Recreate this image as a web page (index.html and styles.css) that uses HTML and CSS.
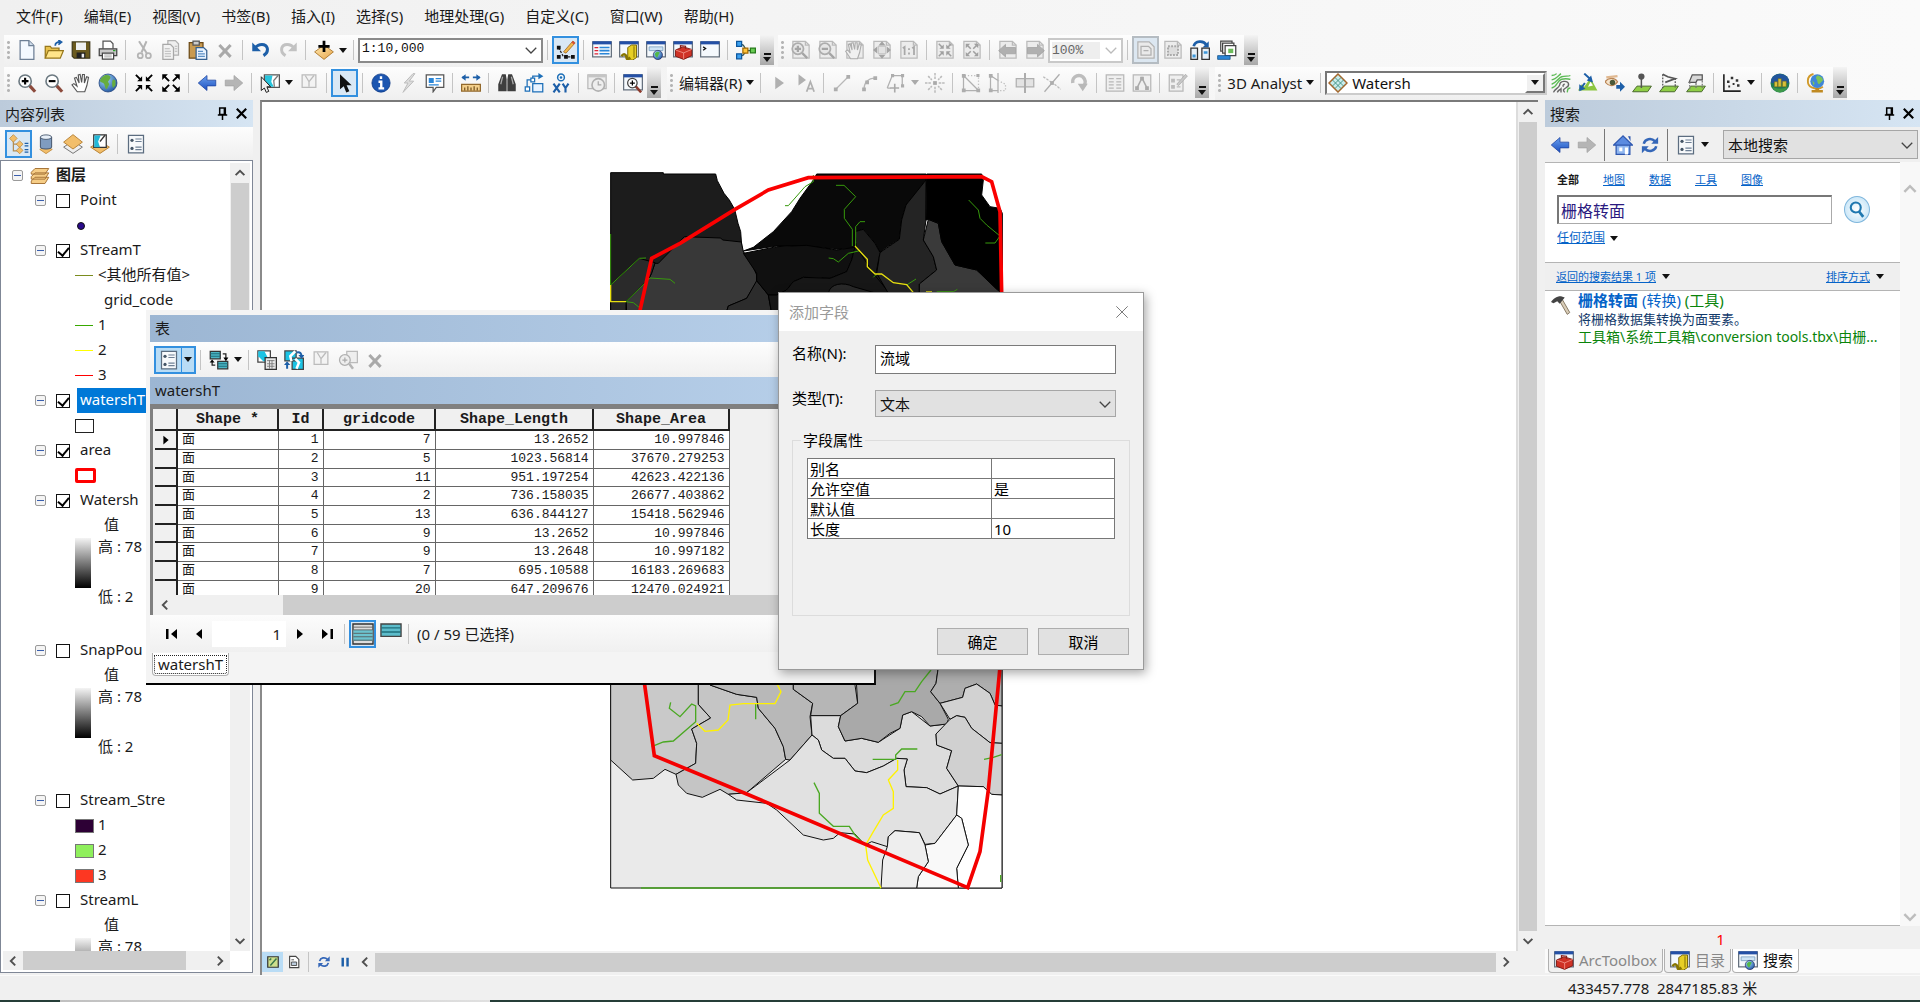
FILE: index.html
```html
<!DOCTYPE html>
<html lang="zh-CN">
<head>
    <meta charset="UTF-8">
    <meta name="viewport" content="width=device-width, initial-scale=1.0">
    <title>ArcMap</title>
    <link rel="stylesheet" href="styles.css">
</head>
<body>
    <!-- Icon sprite -->
    <svg class="sprite" aria-hidden="true">
        <defs>
            <linearGradient id="blueFill" x1="0" y1="0" x2="0" y2="1"><stop offset="0" stop-color="#6aa0ee"/><stop offset="1" stop-color="#1c4fc0"/></linearGradient>
            <linearGradient id="tanFill" x1="0" y1="0" x2="1" y2="1"><stop offset="0" stop-color="#ffe9b0"/><stop offset="1" stop-color="#e8a64c"/></linearGradient>
            <radialGradient id="earthFill" cx=".35" cy=".3" r=".8"><stop offset="0" stop-color="#a8dcff"/><stop offset="1" stop-color="#1a4f9c"/></radialGradient>
        </defs>
        <symbol id="new" viewBox="0 0 16 16"><path d="M2.500.5h7l4 4v11h-11z" fill="#f4f9ff" stroke="#6d7f95"/><path d="M9.500.5v4h4" fill="#cfdcea" stroke="#6d7f95"/></symbol>
        <symbol id="open" viewBox="0 0 16 16"><path d="M1 14.500V5h4l1 1.500h6V9" fill="#e8c14c" stroke="#97771b"/><path d="M1 14.500L3.500 8.500h12L13 14.500z" fill="#ffe58a" stroke="#97771b"/><path d="M9 4.500c0-2 1-3 4-3M11.500 0l2.500 1.700-2.500 2" fill="none" stroke="#1d5fa8" stroke-width="1.400"/></symbol>
        <symbol id="save" viewBox="0 0 16 16"><path d="M1 1.500h14v13H2.500L1 13z" fill="#6a5a1e" stroke="#403a1c"/><path d="M4 2h8v6H4z" fill="#eef0f2"/><path d="M4.500 10h7v4.500h-7z" fill="#222"/><path d="M8.500 11h2v3h-2z" fill="#eee"/></symbol>
        <symbol id="print" viewBox="0 0 16 16"><path d="M4 7V.800h6L12 3v4" fill="#fff" stroke="#555"/><path d="M1 7h14v5.500H1z" fill="#c9c9c9" stroke="#444"/><path d="M3.500 10.500h9v4.700h-9z" fill="#fff" stroke="#444"/><path d="M5 12h6M5 13.500h6" stroke="#999" stroke-width=".7"/><path d="M12 8.500h2" stroke="#2c9c2c"/></symbol>
        <symbol id="cut" viewBox="0 0 16 16"><path d="M4 1l6.500 10M10 1L6 10" fill="none" stroke="#b4b4b4" stroke-width="1.600"/><circle cx="5" cy="12.500" r="2" fill="none" stroke="#b4b4b4" stroke-width="1.400"/><circle cx="11.500" cy="12.500" r="2" fill="none" stroke="#b4b4b4" stroke-width="1.400"/></symbol>
        <symbol id="copy" viewBox="0 0 16 16"><path d="M5.500.5h6L14 3v9H5.500z" fill="#eee" stroke="#b0b0b0"/><path d="M1.500 3.500h6L10 6v9.500H1.500z" fill="#f2f2f2" stroke="#a8a8a8"/><path d="M3 7h4M3 9h5M3 11h5M3 13h5M11 5h2M11 7h2M11 9h2" stroke="#b8b8b8" stroke-width=".8"/></symbol>
        <symbol id="paste" viewBox="0 0 16 16"><path d="M1 2h11v12.500H1z" fill="#c99a50" stroke="#6d4a17"/><path d="M4 .800h5V4H4z" fill="#ccc" stroke="#555"/><path d="M6.500 6h6L15 8.500v7H6.500z" fill="#e8f3ff" stroke="#35608f"/><path d="M8 9h4M8 11h5.500M8 13h5.500" stroke="#5b8fc4"/></symbol>
        <symbol id="del" viewBox="0 0 16 16"><path d="M3.500 4l9 9.500M12.500 4l-9 9.500" stroke="#a9a9a9" stroke-width="2.400"/></symbol>
        <symbol id="undo" viewBox="0 0 16 16"><path d="M3 6.500c3-4 9-4 10 0 .6 2.600-.5 4.500-3 6" fill="none" stroke="#1d5fa8" stroke-width="2.400"/><path d="M1 2v7h7z" fill="#1d5fa8"/></symbol>
        <symbol id="redo" viewBox="0 0 16 16"><path d="M13 6.500c-3-4-9-4-10 0-.6 2.600.5 4.500 3 6" fill="none" stroke="#c2c2c2" stroke-width="2.400"/><path d="M15 2v7H8z" fill="#c2c2c2"/></symbol>
        <symbol id="add" viewBox="0 0 16 16"><path d="M8 4l7.500 5.500L8 15.500.5 9.500z" fill="url(#tanFill)" stroke="#a9762a" stroke-width=".7"/><path d="M8 .5v9M3.500 5h9" stroke="#000" stroke-width="2.200"/></symbol>
        <symbol id="editor" viewBox="0 0 16 16"><path d="M2 6l4 7.500h8" fill="none" stroke="#222" stroke-width="1" stroke-dasharray="2 1"/><path d="M.7 4.500h3v3h-3zM.7 12h3v3h-3zM6.500 12h3v3h-3zM12 12h3v3h-3z" fill="#111"/><path d="M6 9.500L13.500.8l1.800 1.500L8 10.500z" fill="#f2b94a" stroke="#99601c" stroke-width=".6"/><path d="M13.500.8l1.800 1.500-1.200 1.300-1.700-1.600z" fill="#d84c38"/></symbol>
        <symbol id="win" viewBox="0 0 16 16"><path d="M.5 1.500h15v12H.5z" fill="#f5f9fd" stroke="#66717e"/><path d="M.5 1h15v2.500H.5z" fill="#2450a6"/></symbol>
        <symbol id="toc" viewBox="0 0 16 16"><use href="#win"/><path d="M2 6h3M2 8.500h3M2 11h3" stroke="#d23"/><path d="M6 6h8M6 8.500h8M6 11h8" stroke="#2a86d8" stroke-width="1.300"/></symbol>
        <symbol id="catalog" viewBox="0 0 16 16"><use href="#win"/><path d="M7 6l3-2h4v10l-3 2H7z" fill="#e7cf25" stroke="#7c6a0c" stroke-width=".8"/><path d="M2 13c2-3 4-1 4 1s2 1 3 0" fill="none" stroke="#877500" stroke-width="2"/><path d="M12 5v9" stroke="#95820c"/></symbol>
        <symbol id="searchwin" viewBox="0 0 16 16"><use href="#win"/><path d="M2.500 5.500h11v3h-11z" fill="#cfe4f5" stroke="#7fa3c4" stroke-width=".7"/><circle cx="9.500" cy="12" r="3.700" fill="url(#earthFill)" stroke="#225" stroke-width=".5"/><path d="M7 11c1-2 3-2 4-1l-1 2-1 2c-1 0-2-2-2-3z" fill="#54b948"/></symbol>
        <symbol id="toolbox" viewBox="0 0 16 16"><use href="#win"/><path d="M2 8l6-2.500 7 2v5L8.500 15.500 2 13z" fill="#cf3226" stroke="#7a130d" stroke-width=".7"/><path d="M2 8l6.500 2.300L15 7.500M8.500 10.300v5" fill="none" stroke="#f5a197" stroke-width=".6"/><path d="M6 7V4.500l4 .5V7" fill="none" stroke="#8b1e16"/></symbol>
        <symbol id="python" viewBox="0 0 16 16"><use href="#win"/><path d="M2.500 5.500l2 1.300-2 1.400" fill="none" stroke="#111"/></symbol>
        <symbol id="model" viewBox="0 0 16 16"><path d="M4 3.500c4 0 2 5 6 5M4 12.500c4 0 2-4 6-4h3" fill="none" stroke="#355" stroke-width=".9"/><path d="M.5 1h4v4h-4zM.5 11h4v4h-4z" fill="#3ca1f0" stroke="#0c579e"/><path d="M5.500 6.500h4v4h-4z" fill="#ffc53b" stroke="#a26a05"/><path d="M11.500 6.500h4v3.800h-4z" fill="#68cc53" stroke="#267a1a"/></symbol>
        <symbol id="gpage" viewBox="0 0 16 16"><path d="M1.500 1h10l3 3v10.500h-13z" fill="#ececec" stroke="#bababa"/><path d="M11.500 1v3h3" fill="none" stroke="#bababa"/></symbol>
        <symbol id="gzin" viewBox="0 0 16 16"><use href="#gpage"/><circle cx="5.500" cy="7" r="4.500" fill="#e6e6e6" stroke="#adadad" stroke-width="1.400"/><path d="M5.500 4.500v5M3 7h5M9 10.500l4 4" stroke="#a5a5a5" stroke-width="1.800"/></symbol>
        <symbol id="gzout" viewBox="0 0 16 16"><use href="#gpage"/><circle cx="5.500" cy="7" r="4.500" fill="#e6e6e6" stroke="#adadad" stroke-width="1.400"/><path d="M3 7h5M9 10.500l4 4" stroke="#a5a5a5" stroke-width="1.800"/></symbol>
        <symbol id="ghand" viewBox="0 0 16 16"><use href="#gpage"/><path d="M4.500 15L.5 9l1.700-1 2 2.500-1.500-7 1.300-.5L5.700 8 5 2.500l1.500-.3L7.700 7.500l.5-5.300h1.500L9.900 8l1.600-5 1.500.5L11.700 10 10 15z" fill="#f0f0f0" stroke="#adadad" stroke-width=".9"/></symbol>
        <symbol id="gfull" viewBox="0 0 16 16"><use href="#gpage"/><path d="M5 5h6v6H5z" fill="#e2e2e2" stroke="#bbb" stroke-width=".7"/><path d="M8 1l2.800 3.300H5.200zM8 15l2.800-3.300H5.200zM.8 8l3.400-2.800v5.600zM15.200 8l-3.400-2.800v5.600z" fill="#a3a3a3"/></symbol>
        <symbol id="g11" viewBox="0 0 16 16"><use href="#gpage"/><path d="M3 6.500l1.500-1V12M10.500 6.500l1.500-1V12M8 6.500v1.500M8 10v1.500" fill="none" stroke="#a8a8a8" stroke-width="1.400"/></symbol>
        <symbol id="gin" viewBox="0 0 16 16"><use href="#gpage"/><path d="M7 7H3.500L7 3.500zM9 7V3.500L12.500 7zM7 9v3.500L3.500 9zM9 9h3.500L9 12.500z" fill="#a0a0a0"/><path d="M3 3l3 3M13 3l-3 3M3 13l3-3M13 13l-3-3" stroke="#a0a0a0" stroke-width="1.200"/></symbol>
        <symbol id="gout" viewBox="0 0 16 16"><use href="#gpage"/><path d="M3 3h3.500L3 6.500zM13 3v3.500L9.500 3zM3 13V9.500L6.500 13zM13 13H9.500L13 9.500z" fill="#a0a0a0"/><path d="M4 4l3 3M12 4L9 7M4 12l3-3M12 12L9 9" stroke="#a0a0a0" stroke-width="1.200"/></symbol>
        <symbol id="gback" viewBox="0 0 16 16"><use href="#gpage"/><path d="M.5 8.500l5.500-5V6h8v5H6v2.500z" fill="#b0b0b0" stroke="#a0a0a0" stroke-width=".6"/></symbol>
        <symbol id="gfwd" viewBox="0 0 16 16"><use href="#gpage"/><path d="M15.500 8.500l-5.500-5V6H2v5h8v2.500z" fill="#b0b0b0" stroke="#a0a0a0" stroke-width=".6"/></symbol>
        <symbol id="gdraft" viewBox="0 0 16 16"><path d="M1.500 1.500h9l4 4v9h-13z" fill="#eaeaea" stroke="#b3b3b3"/><path d="M4 5h6l2 2v5H4zM6 8.500h4" fill="none" stroke="#b0b0b0"/></symbol>
        <symbol id="gdots" viewBox="0 0 16 16"><use href="#gpage"/><path d="M4 5h8v7H4z" fill="#ddd" stroke="#aaa" stroke-width="1.600" stroke-dasharray="1.500 1"/></symbol>
        <symbol id="layout" viewBox="0 0 16 16"><path d="M3 5c1-4.500 8-5 10-1" fill="none" stroke="#1d5fa8" stroke-width="2.200"/><path d="M15 1v5h-5z" fill="#1d5fa8"/><path d="M.7 6.500H6v9H.7zM9.500 6.500h6v9h-6z" fill="#e8f1f8" stroke="#333"/><path d="M2 11.500h2.500V14H2zM11 9h3v2h-3z" fill="#3c96d8"/></symbol>
        <symbol id="pages" viewBox="0 0 16 16"><path d="M3 .800h9v8H3z" fill="#fff" stroke="#444"/><path d="M4.500 2.500h9v8h-9z" fill="#fff" stroke="#444"/><path d="M6.500 4.500h8.500v8H6.500z" fill="#fff" stroke="#444"/><path d="M9 7h4v3.500H9z" fill="#6cbb5a"/><path d="M.5 12.500h10v3H.5z" fill="#2a86d8" stroke="#124e83" stroke-width=".6"/></symbol>

        <symbol id="zin" viewBox="0 0 16 16"><path d="M9.500 9.500l5 5.500" stroke="#8c4a3c" stroke-width="2.600"/><circle cx="6.500" cy="6.500" r="4.900" fill="#fff" stroke="#6d7a82" stroke-width="1.300"/><path d="M6.500 3.800v5.400M3.800 6.500h5.400" stroke="#000" stroke-width="1.700"/></symbol>
        <symbol id="zout" viewBox="0 0 16 16"><path d="M9.500 9.500l5 5.500" stroke="#8c4a3c" stroke-width="2.600"/><circle cx="6.500" cy="6.500" r="4.900" fill="#fff" stroke="#6d7a82" stroke-width="1.300"/><path d="M3.800 6.500h5.400" stroke="#000" stroke-width="1.700"/></symbol>
        <symbol id="hand" viewBox="0 0 16 16"><path d="M5 15L.8 9.500l1.500-1 2.500 2L2.800 4l1.500-.5L6.500 8l-.7-6.500 1.500-.3L8.500 7.500l.7-6.300h1.500L10.700 8l1.800-5 1.500.5L12.700 10 11 15z" fill="#fff" stroke="#555" stroke-width=".9"/></symbol>
        <symbol id="globe" viewBox="0 0 16 16"><circle cx="8" cy="8" r="7.200" fill="url(#earthFill)" stroke="#1d3f78" stroke-width=".6"/><path d="M5 2c3-1 5 0 5 2l-2 3 1 2-2 4c-2-1-1-4-3-5s-3-1-2-3 2-2 3-3zM12 5l2 1v4l-2 2c-1-2-1-5 0-7z" fill="#67ad3f"/></symbol>
        <symbol id="fin" viewBox="0 0 16 16"><path d="M6.500 6.500H2.500L6.500 2.500zM9.500 6.500V2.500L13.500 6.500zM6.500 9.500v4L2.500 9.500zM9.500 9.500h4L9.500 13.500z"/><path d="M1.500 1.500l4 4M14.500 1.500l-4 4M1.500 14.500l4-4M14.500 14.500l-4-4" stroke="#000" stroke-width="1.500"/></symbol>
        <symbol id="fout" viewBox="0 0 16 16"><path d="M1 1h4.500L1 5.500zM15 1v4.500L10.500 1zM1 15v-4.500L5.500 15zM15 15h-4.500L15 10.500z"/><path d="M2 2l4.500 4.500M14 2L9.500 6.500M2 14l4.500-4.500M14 14L9.500 9.500" stroke="#000" stroke-width="1.500"/></symbol>
        <symbol id="back" viewBox="0 0 16 16"><path d="M1 8l7-6v3.700h7v4.600H8V14z" fill="url(#blueFill)" stroke="#1c429e" stroke-width=".6"/></symbol>
        <symbol id="fwd" viewBox="0 0 16 16"><path d="M15 8L8 2v3.700H1v4.600h7V14z" fill="#b5b5b5" stroke="#a3a3a3" stroke-width=".6"/></symbol>
        <symbol id="select" viewBox="0 0 16 16"><path d="M3.500 1.500h12v10h-12z" fill="#fff" stroke="#555"/><path d="M4 2h6l-1 5 2 4H8L4 7z" fill="#28c4dc"/><path d="M14.500 2L11 6l.5 5" fill="none" stroke="#777"/><path d="M1 3v11l2.500-2 1.500 3.500 2-.8L5.500 11h3z" fill="#eee" stroke="#222" stroke-width=".8"/></symbol>
        <symbol id="clear" viewBox="0 0 16 16"><path d="M2.500 1.500h11v10h-11z" fill="#f3f3f3" stroke="#bbb"/><path d="M5 2l3 5 4-5M8 7v4" fill="none" stroke="#bbb"/></symbol>
        <symbol id="pointer" viewBox="0 0 16 16"><path d="M4 1v12l3-2.500 2 5 2.500-1-2.200-4.700h4z" fill="#111"/></symbol>
        <symbol id="info" viewBox="0 0 16 16"><circle cx="8" cy="8" r="7.300" fill="#1b55b0" stroke="#0e3984" stroke-width=".6"/><path d="M8 2.500v2.200M6 7h2.200v5M6 12.300h4.500" fill="none" stroke="#fff" stroke-width="1.900"/></symbol>
        <symbol id="bolt" viewBox="0 0 16 16"><path d="M12 .5L5 8h3L4 15.500 12.500 6.500H9L13.500.5z" fill="#ddd" stroke="#bcbcbc" stroke-width=".8"/></symbol>
        <symbol id="popup" viewBox="0 0 16 16"><path d="M1 1.500h14v10H9L6.500 15v-3.500H1z" fill="#fff" stroke="#555"/><path d="M3 4h4v4H3z" fill="#2a86d8"/><path d="M8.500 4.500h4.500M8.500 6.500h4.500M3 9.500h8" stroke="#2a86d8"/></symbol>
        <symbol id="measure" viewBox="0 0 16 16"><path d="M1 3.500h5.500M9.500 3.500H15" stroke="#1d5fa8" stroke-width="1.500"/><path d="M.3 3.500l3.400-2.600v5.200zM15.700 3.500l-3.400-2.600v5.200z" fill="#1d5fa8"/><path d="M.5 9h15v5.500H.5z" fill="#f3cf8b" stroke="#92682b"/><path d="M3 11.500V14M5.500 10.500V14M8 11.500V14M10.500 10.500V14M13 11.500V14" stroke="#6b4715" stroke-width=".9"/></symbol>
        <symbol id="binoc" viewBox="0 0 16 16"><path d="M4 1h3l.7 4v9.500H1V9zM12 1H9l-.7 4v9.500H15V9z" fill="#3e3e3e"/><path d="M4.500 3L3 9M11.500 3L13 9" stroke="#aaa"/></symbol>
        <symbol id="route" viewBox="0 0 16 16"><path d="M2.500 12V5.500H7V2.500h6" fill="none" stroke="#1d6fb8"/><path d="M1 11h3.500v3.500H1zM5.500 4h3v3h-3z" fill="#fff" stroke="#1d6fb8"/><path d="M11.500 0l4 2.500-4 2.500z" fill="#1d6fb8"/><path d="M7 8.500h8v6.500H7z" fill="#e8f3ff" stroke="#1d6fb8"/></symbol>
        <symbol id="xy" viewBox="0 0 16 16"><circle cx="8" cy="3.500" r="2.700" fill="none" stroke="#1d6fb8" stroke-width="1.200"/><circle cx="8" cy="3.500" r="1" fill="#1d6fb8"/><path d="M2 8.500l5 7M7 8.500l-5 7M9.300 8.500L11.600 12v3.500M14 8.500L11.600 12" fill="none" stroke="#1d5fa8" stroke-width="1.700"/></symbol>
        <symbol id="clock" viewBox="0 0 16 16"><path d="M.7 1.500h14.600v11H.7z" fill="#eee" stroke="#b8b8b8"/><path d="M1 2.500h14" stroke="#c5c5c5" stroke-width="2"/><circle cx="9" cy="9.500" r="5" fill="#eee" stroke="#b0b0b0" stroke-width="1.300"/><path d="M9 6.500v3h2.500" fill="none" stroke="#aaa"/></symbol>
        <symbol id="viewer" viewBox="0 0 16 16"><use href="#win"/><path d="M10 10.500l4.500 5" stroke="#8c3a2c" stroke-width="2"/><circle cx="7.500" cy="8" r="3.800" fill="#fff" stroke="#444"/><path d="M7.500 6v4M5.500 8h4" stroke="#000"/></symbol>

        <symbol id="e1" viewBox="0 0 16 16"><path d="M5 3v10l7-5z" fill="#b0b0b0"/></symbol>
        <symbol id="e2" viewBox="0 0 16 16"><path d="M2 1v9l6-4.500z" fill="#b0b0b0"/><path d="M8.500 15l3-8 3 8M9.500 12.500h4" fill="none" stroke="#b0b0b0" stroke-width="1.400"/></symbol>
        <symbol id="e3" viewBox="0 0 16 16"><path d="M3 13L13 3" stroke="#b8b8b8"/><path d="M1.500 11.500h3v3h-3zM11.500 1.500h3v3h-3z" fill="#adadad"/></symbol>
        <symbol id="e4" viewBox="0 0 16 16"><path d="M4 13c0-5 3-9 9-9" fill="none" stroke="#b8b8b8"/><path d="M2.500 11.500h3v3h-3zM11.500 2.500h3v3h-3zM5 6h3v3H5z" fill="#adadad"/></symbol>
        <symbol id="e5" viewBox="0 0 16 16"><path d="M1 12L5 2h8v9M1 12h3" fill="none" stroke="#b0b0b0"/><path d="M4 .8h2.500v2.500H4zM12 .8h2.500v2.500H12zM12 9h2.500v2.500H12z" fill="#adadad"/><path d="M7 8.500v7M3.500 12h7" stroke="#aaa" stroke-width="1.300"/></symbol>
        <symbol id="e6" viewBox="0 0 16 16"><path d="M8 0v5M8 11v5M0 8h5M11 8h5M2.500 2.500l3 3M13.500 2.500l-3 3M2.500 13.500l3-3M13.500 13.500l-3-3" stroke="#bbb" stroke-width="1.200" stroke-dasharray="2 .7"/><path d="M6.500 6.500h3v3h-3z" fill="#aaa"/></symbol>
        <symbol id="e7" viewBox="0 0 16 16"><path d="M2 2v12h12zM2 2l12 12" fill="none" stroke="#b0b0b0"/><path d="M3 2h11v11" fill="none" stroke="#c0c0c0" stroke-dasharray="1 1.500"/><path d="M.7.7h3v3h-3zM.7 12.300h3v3h-3zM12.300 12.300h3v3h-3zM12.300.7h2.500v2.500h-2.500z" fill="#adadad"/></symbol>
        <symbol id="e8" viewBox="0 0 16 16"><path d="M2 2v12M2 14h6M8 0v16M2 2l6 4" fill="none" stroke="#b0b0b0"/><path d="M8 6l6 3v5H8" fill="none" stroke="#bbb" stroke-dasharray="1 1.500"/><path d="M.7.7h3v3h-3zM.7 12.300h3v3h-3z" fill="#adadad"/></symbol>
        <symbol id="e9" viewBox="0 0 16 16"><path d="M1 4.500h14v6.500H1z" fill="#e3e3e3" stroke="#b0b0b0"/><path d="M8 0v16" stroke="#adadad" stroke-width="1.600"/></symbol>
        <symbol id="e10" viewBox="0 0 16 16"><path d="M2 15L14 1" stroke="#adadad"/><path d="M1 3l6 4M10 9l5 4" stroke="#bbb" stroke-dasharray="2 1"/><path d="M6.500 6.500h3v3h-3z" fill="#adadad"/></symbol>
        <symbol id="e11" viewBox="0 0 16 16"><path d="M3 8a5 5 0 1 1 8 3" fill="none" stroke="#bdbdbd" stroke-width="2.800"/><path d="M7 8.500h8l-4 6z" fill="#b8b8b8"/></symbol>
        <symbol id="e12" viewBox="0 0 16 16"><path d="M1 1.500h14v13H1z" fill="#efefef" stroke="#b8b8b8"/><path d="M3 4.500h4M3 7h4M3 9.500h4M3 12h4M9 4.500h4M9 7h4M9 9.500h4M9 12h4" stroke="#b8b8b8"/></symbol>
        <symbol id="e13" viewBox="0 0 16 16"><path d="M1 1.500h14v13H1z" fill="#efefef" stroke="#b8b8b8"/><path d="M4 12l4-8 4 8" fill="none" stroke="#aaa" stroke-width="1.300"/><path d="M2.500 10.500h3v3h-3zM10.500 10.500h3v3h-3zM6.500 3h3v3h-3z" fill="#aaa"/></symbol>
        <symbol id="e14" viewBox="0 0 16 16"><path d="M1 1.500h11v13H1z" fill="#efefef" stroke="#b8b8b8"/><path d="M3 5h2v2H3zM3 10h2v2H3zM7 5.500h3M7 11h3" fill="#bbb" stroke="#bbb"/><path d="M7 9l7-8 1.500 1.500-7 7.500z" fill="#c8c8c8" stroke="#aaa" stroke-width=".6"/></symbol>

        <symbol id="raster" viewBox="0 0 16 16"><path d="M8 .8L15.200 8 8 15.200.8 8z" fill="#c9ecec" stroke="#a5672c" stroke-width="1.200"/><path d="M5.500 3.500l7 7M3.500 5.500l7 7M10.500 3.500l-7 7M12.500 5.500l-7 7" stroke="#3a8c7c" stroke-width=".7"/></symbol>
        <symbol id="contour" viewBox="0 0 16 16"><path d="M.5 2c2 0 3-.5 4-1.500M.5 5.500C4 5 6 2 8 .5M.5 9c4-1 5-5 8-6s5 0 7-1M.5 12c5-1 4-6 8-7s5 0 7 0M15.500 12c-3 0-2 2-2.500 3.500" fill="none" stroke="#5cba55" stroke-width="1.100"/><path d="M2 15.500c1-3 4-3 5-6 0-3 6-4 7-1s-3 3-4 5c0 1 1 2 1 2M10 11c-1-1 0-2 1-2M5 15.500c1-2 2-2 3-3v3" fill="none" stroke="#666" stroke-width="1.100"/></symbol>
        <symbol id="steep" viewBox="0 0 16 16"><path d="M0 14l3-5 2 2 5-7 5.500 10z" fill="#8cc63f"/><path d="M8 11l2-4 2 3z" fill="#fff"/><path d="M5 .5l5 4.500M5.500 8L2.500 12" stroke="#1d5fa8" stroke-width="1.600"/><path d="M12 7.500L7 6l3.500-4zM1 14.500V9l5 3.500z" fill="#1d5fa8"/></symbol>
        <symbol id="sight" viewBox="0 0 16 16"><path d="M0 7c3-4 8-3 10 0-3 4-7 4-10 0z" fill="#f6e4cc" stroke="#b98555"/><circle cx="6" cy="7.500" r="2.200" fill="#4b5a3a"/><path d="M9 9.500h3V7l4 4-4 4v-2.500H9z" fill="#1d5fa8"/><path d="M1 3.500l9-1" stroke="#e0b890" stroke-width="2"/></symbol>
        <symbol id="ipoint" viewBox="0 0 16 16"><path d="M4 10.500h11.500l-3 4.500H.5z" fill="#8fce46" stroke="#4a6a2e" stroke-width=".8"/><path d="M7.500 4v8" stroke="#555" stroke-width="1.200"/><circle cx="7.500" cy="2.800" r="2.500" fill="#555"/></symbol>
        <symbol id="iline" viewBox="0 0 16 16"><path d="M4 10.500h11.500l-3 4.500H.5z" fill="#8fce46" stroke="#4a6a2e" stroke-width=".8"/><path d="M3 1l4 2 6 1.500-8 3" fill="none" stroke="#555" stroke-width="1.300"/><path d="M3 1v11M13 4v8" fill="none" stroke="#555" stroke-dasharray="1.500 1"/></symbol>
        <symbol id="ipoly" viewBox="0 0 16 16"><path d="M4 10.500h11.500l-3 4.500H.5z" fill="#8fce46" stroke="#4a6a2e" stroke-width=".8"/><path d="M5 1.500h8v4H9l-1 2H2.500z" fill="#d8d8d8" stroke="#555"/><path d="M3 7v6M8 8v5M13 6v6" stroke="#777" stroke-dasharray="1.500 1"/></symbol>
        <symbol id="graph" viewBox="0 0 16 16"><path d="M1.500 1v13.500H15" fill="none" stroke="#222" stroke-width="1.300"/><path d="M4 6h2v2H4zM7 3h2v2H7zM11 5h2v2h-2zM12 9h2v2h-2zM5 10h1.500v1.500H5zM8.500 8H10v1.500H8.500z" fill="#333"/></symbol>
        <symbol id="scene" viewBox="0 0 16 16"><circle cx="8" cy="8" r="7.600" fill="#1f7a55"/><path d="M1 5C3 0 12-1 15 5v3H1z" fill="#22559c"/><path d="M2 11c3 2 9 2 12 0-1 3-4 4.500-6 4.500s-5-1-6-4.500z" fill="#3d9a4a"/><path d="M3.500 7h2.500v4H3.500zM6.500 4.500h2.500v6.500H6.500zM10 6.500h3v4.500h-3z" fill="#d8c03a" stroke="#7a6a10" stroke-width=".4"/></symbol>
        <symbol id="arcglobe" viewBox="0 0 16 16"><path d="M6 .8C0 2 .5 10 4.500 11.500s7 1 9-.5" fill="none" stroke="#d19a2a" stroke-width="1.500"/><circle cx="9" cy="6.500" r="5.500" fill="#3f86d8"/><path d="M9 2c2 0 5 2 4.500 4l-3 3c-2-1-1-3-2-4s-.5-2 .5-3zM5 6l2 2-1 2z" fill="#7cc45a"/><path d="M7.500 12h3v1.500h3V15.500H4.500v-2h3z" fill="#c08a22"/></symbol>

        <symbol id="order" viewBox="0 0 16 16"><path d="M3.500 4v9.500h4M3.500 8h4" fill="none" stroke="#b28d55"/><path d="M3.500.5l3 3-3 3-3-3zM8.500 5.500l2.700 2.600-2.700 2.700L5.800 8.100zM8.500 10.500l2.700 2.600-2.700 2.700-2.700-2.700z" fill="#f2be6a" stroke="#b9853a" stroke-width=".6"/><path d="M12.500 7.500h3M12.500 9.500h3M12.500 12.500h3M12.500 14.500h3" stroke="#1d5fa8"/></symbol>
        <symbol id="source" viewBox="0 0 16 16"><path d="M8 9.500l5 2.800-5 3.400-5-3.400z" fill="#f2be6a" stroke="#b9853a" stroke-width=".6"/><path d="M3.500 2.500v8c0 2 9 2 9 0v-8z" fill="#7f9cc0" stroke="#44556c" stroke-width=".8"/><ellipse cx="8" cy="2.500" rx="4.500" ry="1.800" fill="#e6eef7" stroke="#44556c" stroke-width=".7"/></symbol>
        <symbol id="visible" viewBox="0 0 16 16"><path d="M8 5.500l7.500 5-7.500 5-7.500-5z" fill="#eee" stroke="#777" stroke-width=".8"/><path d="M8 .5l7.500 6-7.500 5.500-7.500-5.500z" fill="#f2be6a" stroke="#b9853a" stroke-width=".8"/></symbol>
        <symbol id="selection" viewBox="0 0 16 16"><path d="M8 6l7.500 4.500-7.500 5-7.500-5z" fill="#f2be6a" stroke="#b9853a" stroke-width=".8"/><path d="M3 .7h10v10H3z" fill="#fff" stroke="#333"/><path d="M3.500 1.200h5L6.500 6l1.500 4.500H3.500z" fill="#22b8d8"/><path d="M12 1L8 6" stroke="#333"/></symbol>
        <symbol id="options" viewBox="0 0 16 16"><path d="M2 1h12v14H2z" fill="#f7f9fb" stroke="#5c6d80"/><circle cx="4.800" cy="5" r="1.300" fill="#456"/><circle cx="4.800" cy="11.500" r="1.300" fill="#456"/><path d="M7.500 4h5M7.500 6h5M7.500 10.500h5M7.500 12.500h5" stroke="#6e8095" stroke-width=".9"/></symbol>
        <symbol id="layers" viewBox="0 0 16 16"><path d="M1 12l3-3h11l-3 5H1zM1 8.500l3-3h11l-3 5H1zM1 5l3-3h11l-3 4.500H1z" fill="#f6cd86" stroke="#a8763a" stroke-width=".8"/></symbol>
        <symbol id="related" viewBox="0 0 16 16"><path d="M1 1h8v6H1zM7 9h8v6H7z" fill="#4cb5c4" stroke="#333"/><path d="M1 3h8M1 5h8M7 11h8M7 13h8" stroke="#1e6f7c" stroke-width=".8"/><path d="M11 3h2.500v4M5 12H2.500V9" fill="none" stroke="#222"/><path d="M11.500 6h4L13.500 9zM.5 10h4L2.500 7.500z"/></symbol>
        <symbol id="selattr" viewBox="0 0 16 16"><path d="M.7.7h10v9h-10z" fill="#fff" stroke="#444"/><path d="M1 1h5L8 5l1 4H5L1 5z" fill="#1cc3e4"/><path d="M6.500 6h9v9.500h-9z" fill="#e9e9e9" stroke="#333"/><path d="M8 8.500h6M8 11h6M8 13h6M10 8v7M12 8v7" stroke="#777" stroke-width=".7"/></symbol>
        <symbol id="switch" viewBox="0 0 16 16"><path d="M.7.7h9v8h-9zM6.500 6.500h9v9h-9z" fill="#1cc3e4" stroke="#444"/><path d="M9 1L5 5l1 4M9 7l3 3-2 5" fill="none" stroke="#fff" stroke-width="2"/><path d="M10 2c3-1 4 1 4 3M2.500 15v-4" fill="none" stroke="#1d5fa8" stroke-width="1.600"/><path d="M11.500 4h5L14 7zM0 12h5L2.500 9z" fill="#1d5fa8"/></symbol>
        <symbol id="zsel" viewBox="0 0 16 16"><path d="M7 1h8.500v9H7z" fill="#eee" stroke="#bbb"/><path d="M9 11l3 4" stroke="#b5b5b5" stroke-width="2"/><circle cx="5.500" cy="8" r="4.300" fill="#eee" stroke="#b0b0b0"/><path d="M5.500 6v4M3.500 8h4" stroke="#aaa"/></symbol>
        <symbol id="allrec" viewBox="0 0 16 16"><path d="M.7.7h14.600v14.600H.7z" fill="#ddd" stroke="#333"/><path d="M1 5h14v8H1z" fill="#6cc3cf"/><path d="M1 3h14M1 5h14M1 7.500h14M1 10h14M1 12.500h14" stroke="#555" stroke-width=".6"/></symbol>
        <symbol id="selrec" viewBox="0 0 16 16"><path d="M.7.7h14.600v9H.7z" fill="#5cbccb" stroke="#444"/><path d="M1 3.500h14M1 6.500h14" stroke="#1e6f7c"/></symbol>
        <symbol id="home" viewBox="0 0 16 16"><path d="M2.500 7.500h11v8h-11z" fill="#8fb6ef" stroke="#2d56ae"/><path d="M8 .7L.5 8h15z" fill="#5b8be0" stroke="#2d56ae"/><path d="M12 1h2v4" fill="#2d56ae"/><path d="M5 10h2.500v3H5zM9.500 10H12v5.500H9.500z" fill="#fff"/></symbol>
        <symbol id="refresh" viewBox="0 0 16 16"><path d="M3 7c1-4 6-5 9-2M13 9c-1 4-6 5-9 2" fill="none" stroke="#3567b8" stroke-width="2"/><path d="M14.500 1.500V7H9zM1.500 14.500V9H7z" fill="#3567b8"/></symbol>
        <symbol id="glass" viewBox="0 0 16 16"><circle cx="7" cy="6" r="4" fill="none" stroke="#1f78b0" stroke-width="1.700"/><path d="M9.500 9l3.500 4.500" stroke="#1f78b0" stroke-width="2.200"/></symbol>
        <symbol id="hammer" viewBox="0 0 16 16"><path d="M7 5l2-1.500L15 14l-2 1.500z" fill="#d9cdb8" stroke="#7a6b55" stroke-width=".7"/><path d="M0 5.500C2 3 4 1 8 1l3 1-4 5-2-2-3 1.500z" fill="#444"/></symbol>
        <symbol id="dataview" viewBox="0 0 16 16"><path d="M2 2h12v12H2z" fill="#cddf8c" stroke="#333" stroke-width="1.400"/><path d="M5 12l7-8M4 6l2-2" stroke="#39764a" stroke-width="1.700"/></symbol>
        <symbol id="pageview" viewBox="0 0 16 16"><path d="M3 1.500h7l3.500 3.500v9.500H3z" fill="#fff" stroke="#444" stroke-width="1.300"/><path d="M5 8h6v4H5zM5 5.500h3" fill="#bcd" stroke="#444"/></symbol>
        <symbol id="pause" viewBox="0 0 16 16"><path d="M4 3h2.800v10H4zM9.500 3h2.800v10H9.500z" fill="#1d5fa8"/></symbol>
        <symbol id="pin" viewBox="0 0 16 16"><path d="M5 2h6v7H5zM3 9.500h10M8 10v5M10 2v7" fill="none" stroke="#000" stroke-width="1.600"/></symbol>
        <symbol id="close" viewBox="0 0 16 16"><path d="M3 3l10 10M13 3L3 13" stroke="#000" stroke-width="2.300"/></symbol>
        <symbol id="thinclose" viewBox="0 0 16 16"><path d="M1.500 1.500l13 13M14.500 1.500l-13 13" stroke="#777" stroke-width="1.100"/></symbol>
        <symbol id="up" viewBox="0 0 16 16"><path d="M3 10.500l5-5 5 5" fill="none" stroke="currentColor" stroke-width="2.200"/></symbol>
        <symbol id="down" viewBox="0 0 16 16"><path d="M3 5.500l5 5 5-5" fill="none" stroke="currentColor" stroke-width="2.200"/></symbol>
        <symbol id="chevron" viewBox="0 0 16 16"><path d="M2 5.500l6 6 6-6" fill="none" stroke="currentColor" stroke-width="1.500"/></symbol>
        <symbol id="left" viewBox="0 0 16 16"><path d="M10.500 3l-5 5 5 5" fill="none" stroke="currentColor" stroke-width="2.200"/></symbol>
        <symbol id="right" viewBox="0 0 16 16"><path d="M5.500 3l5 5-5 5" fill="none" stroke="currentColor" stroke-width="2.200"/></symbol>
        <symbol id="first" viewBox="0 0 16 16"><path d="M2 3h2.500v10H2zM13 3v10L7 8z"/></symbol>
        <symbol id="prev" viewBox="0 0 16 16"><path d="M11 3v10L5 8z"/></symbol>
        <symbol id="next" viewBox="0 0 16 16"><path d="M5 3v10l6-5z"/></symbol>
        <symbol id="last" viewBox="0 0 16 16"><path d="M11.500 3H14v10h-2.500zM3 3v10l6-5z"/></symbol>
    </svg>

    <nav class="menubar">
        <button>文件(F)</button>
        <button>编辑(E)</button>
        <button>视图(V)</button>
        <button>书签(B)</button>
        <button>插入(I)</button>
        <button>选择(S)</button>
        <button>地理处理(G)</button>
        <button>自定义(C)</button>
        <button>窗口(W)</button>
        <button>帮助(H)</button>
    </nav>

    <div class="toolbar-row">
        <div class="toolbar">
            <span class="grip"></span>
            <button class="tool" aria-label="新建"><svg><use href="#new"/></svg></button>
            <button class="tool" aria-label="打开"><svg><use href="#open"/></svg></button>
            <button class="tool" aria-label="保存"><svg><use href="#save"/></svg></button>
            <button class="tool" aria-label="打印"><svg><use href="#print"/></svg></button>
            <span class="sep"></span>
            <button class="tool" aria-label="剪切"><svg><use href="#cut"/></svg></button>
            <button class="tool" aria-label="复制"><svg><use href="#copy"/></svg></button>
            <button class="tool" aria-label="粘贴"><svg><use href="#paste"/></svg></button>
            <button class="tool" aria-label="删除"><svg><use href="#del"/></svg></button>
            <span class="sep"></span>
            <button class="tool" aria-label="撤销"><svg><use href="#undo"/></svg></button>
            <button class="tool" aria-label="恢复"><svg><use href="#redo"/></svg></button>
            <span class="sep"></span>
            <button class="tool" aria-label="添加数据"><svg><use href="#add"/></svg></button>
            <button class="drop" aria-label="添加数据菜单"></button>
            <span class="sep"></span>
            <span class="combo combo-scale">
                <select aria-label="比例"><option>1:10,000</option></select>
                <svg><use href="#chevron"/></svg>
            </span>
            <span class="sep"></span>
            <button class="tool active" aria-label="编辑器工具条"><svg><use href="#editor"/></svg></button>
            <span class="sep"></span>
            <button class="tool" aria-label="内容列表"><svg><use href="#toc"/></svg></button>
            <button class="tool" aria-label="目录"><svg><use href="#catalog"/></svg></button>
            <button class="tool" aria-label="搜索"><svg><use href="#searchwin"/></svg></button>
            <button class="tool" aria-label="ArcToolbox"><svg><use href="#toolbox"/></svg></button>
            <button class="tool" aria-label="Python"><svg><use href="#python"/></svg></button>
            <span class="sep"></span>
            <button class="tool" aria-label="模型构建器"><svg><use href="#model"/></svg></button>
            <button class="overflow" aria-label="更多"></button>
        </div>
        <div class="toolbar">
            <span class="grip"></span>
            <button class="tool" aria-label="放大页面"><svg><use href="#gzin"/></svg></button>
            <button class="tool" aria-label="缩小页面"><svg><use href="#gzout"/></svg></button>
            <button class="tool" aria-label="平移页面"><svg><use href="#ghand"/></svg></button>
            <button class="tool" aria-label="整个页面"><svg><use href="#gfull"/></svg></button>
            <button class="tool" aria-label="实际大小"><svg><use href="#g11"/></svg></button>
            <span class="sep"></span>
            <button class="tool" aria-label="固定放大"><svg><use href="#gin"/></svg></button>
            <button class="tool" aria-label="固定缩小"><svg><use href="#gout"/></svg></button>
            <span class="sep"></span>
            <button class="tool" aria-label="上一范围"><svg><use href="#gback"/></svg></button>
            <button class="tool" aria-label="下一范围"><svg><use href="#gfwd"/></svg></button>
            <span class="combo combo-percent">
                <select aria-label="缩放百分比"><option>100%</option></select>
                <svg><use href="#chevron"/></svg>
            </span>
            <span class="sep"></span>
            <button class="tool pressed" aria-label="草图模式"><svg><use href="#gdraft"/></svg></button>
            <button class="tool" aria-label="焦点数据框"><svg><use href="#gdots"/></svg></button>
            <button class="tool" aria-label="更改布局"><svg><use href="#layout"/></svg></button>
            <button class="tool" aria-label="数据驱动页面"><svg><use href="#pages"/></svg></button>
            <button class="overflow" aria-label="更多"></button>
        </div>
    </div>

    <div class="toolbar-row">
        <div class="toolbar">
            <span class="grip"></span>
            <button class="tool" aria-label="放大"><svg><use href="#zin"/></svg></button>
            <button class="tool" aria-label="缩小"><svg><use href="#zout"/></svg></button>
            <button class="tool" aria-label="平移"><svg><use href="#hand"/></svg></button>
            <button class="tool" aria-label="全图"><svg><use href="#globe"/></svg></button>
            <span class="sep"></span>
            <button class="tool" aria-label="固定比例放大"><svg><use href="#fin"/></svg></button>
            <button class="tool" aria-label="固定比例缩小"><svg><use href="#fout"/></svg></button>
            <span class="sep"></span>
            <button class="tool" aria-label="返回"><svg><use href="#back"/></svg></button>
            <button class="tool" aria-label="前进"><svg><use href="#fwd"/></svg></button>
            <span class="sep"></span>
            <button class="tool" aria-label="选择要素"><svg><use href="#select"/></svg></button>
            <button class="drop" aria-label="选择要素菜单"></button>
            <button class="tool" aria-label="清除所选要素"><svg><use href="#clear"/></svg></button>
            <span class="sep"></span>
            <button class="tool active" aria-label="选择元素"><svg><use href="#pointer"/></svg></button>
            <span class="sep"></span>
            <button class="tool" aria-label="识别"><svg><use href="#info"/></svg></button>
            <button class="tool" aria-label="超链接"><svg><use href="#bolt"/></svg></button>
            <button class="tool" aria-label="HTML 弹出窗口"><svg><use href="#popup"/></svg></button>
            <span class="sep"></span>
            <button class="tool" aria-label="测量"><svg><use href="#measure"/></svg></button>
            <span class="sep"></span>
            <button class="tool" aria-label="查找"><svg><use href="#binoc"/></svg></button>
            <button class="tool" aria-label="查找路径"><svg><use href="#route"/></svg></button>
            <button class="tool" aria-label="转到 XY"><svg><use href="#xy"/></svg></button>
            <span class="sep"></span>
            <button class="tool" aria-label="时间滑块"><svg><use href="#clock"/></svg></button>
            <span class="sep"></span>
            <button class="tool" aria-label="查看器窗口"><svg><use href="#viewer"/></svg></button>
            <button class="overflow" aria-label="更多"></button>
        </div>
        <div class="toolbar">
            <span class="grip"></span>
            <button class="text-tool">编辑器(R)</button>
            <button class="drop" aria-label="编辑器菜单"></button>
            <span class="sep"></span>
            <button class="tool" aria-label="编辑工具"><svg><use href="#e1"/></svg></button>
            <button class="tool" aria-label="编辑注记"><svg><use href="#e2"/></svg></button>
            <span class="sep"></span>
            <button class="tool" aria-label="直线段"><svg><use href="#e3"/></svg></button>
            <button class="tool" aria-label="弧段"><svg><use href="#e4"/></svg></button>
            <button class="tool" aria-label="追踪"><svg><use href="#e5"/></svg></button>
            <button class="drop muted" aria-label="追踪菜单"></button>
            <button class="tool" aria-label="点"><svg><use href="#e6"/></svg></button>
            <span class="sep"></span>
            <button class="tool" aria-label="编辑折点"><svg><use href="#e7"/></svg></button>
            <button class="tool" aria-label="整形"><svg><use href="#e8"/></svg></button>
            <button class="tool" aria-label="裁剪面"><svg><use href="#e9"/></svg></button>
            <button class="tool" aria-label="分割"><svg><use href="#e10"/></svg></button>
            <button class="tool" aria-label="旋转"><svg><use href="#e11"/></svg></button>
            <span class="sep"></span>
            <button class="tool" aria-label="属性"><svg><use href="#e12"/></svg></button>
            <button class="tool" aria-label="草图属性"><svg><use href="#e13"/></svg></button>
            <span class="sep"></span>
            <button class="tool" aria-label="创建要素"><svg><use href="#e14"/></svg></button>
            <button class="overflow" aria-label="更多"></button>
        </div>
        <div class="toolbar">
            <span class="grip"></span>
            <button class="text-tool">3D Analyst</button>
            <button class="drop" aria-label="3D Analyst 菜单"></button>
            <span class="sep"></span>
            <span class="combo combo-layer">
                <svg class="lead"><use href="#raster"/></svg>
                <select aria-label="图层"><option>Watersh</option></select>
                <span class="classic-arrow"></span>
            </span>
            <button class="tool" aria-label="等值线"><svg><use href="#contour"/></svg></button>
            <button class="tool" aria-label="最陡路径"><svg><use href="#steep"/></svg></button>
            <button class="tool" aria-label="通视线"><svg><use href="#sight"/></svg></button>
            <button class="tool" aria-label="插入点"><svg><use href="#ipoint"/></svg></button>
            <button class="tool" aria-label="插入线"><svg><use href="#iline"/></svg></button>
            <button class="tool" aria-label="插入面"><svg><use href="#ipoly"/></svg></button>
            <span class="sep"></span>
            <button class="tool" aria-label="剖面图"><svg><use href="#graph"/></svg></button>
            <button class="drop" aria-label="剖面图菜单"></button>
            <span class="sep"></span>
            <button class="tool" aria-label="ArcScene"><svg><use href="#scene"/></svg></button>
            <span class="sep"></span>
            <button class="tool" aria-label="ArcGlobe"><svg><use href="#arcglobe"/></svg></button>
            <button class="overflow" aria-label="更多"></button>
        </div>
    </div>

    <main class="workspace">
        <aside class="toc">
            <header class="panel-title">
                <h2>内容列表</h2>
                <button aria-label="自动隐藏"><svg><use href="#pin"/></svg></button>
                <button aria-label="关闭"><svg><use href="#close"/></svg></button>
            </header>
            <div class="toc-tools">
                <button class="tool active" aria-label="按绘制顺序列出"><svg><use href="#order"/></svg></button>
                <button class="tool" aria-label="按源列出"><svg><use href="#source"/></svg></button>
                <button class="tool" aria-label="按可见性列出"><svg><use href="#visible"/></svg></button>
                <button class="tool" aria-label="按选择列出"><svg><use href="#selection"/></svg></button>
                <span class="sep"></span>
                <button class="tool" aria-label="选项"><svg><use href="#options"/></svg></button>
            </div>
            <div class="toc-box">
                <div class="toc-body">
                    <div class="tree">
                        <div class="node root"><span class="fold"></span><svg><use href="#layers"/></svg><b>图层</b></div>
                        <div class="node"><span class="fold"></span><label><input type="checkbox"><span>Point</span></label></div>
                        <div class="legend"><span class="sym"><i class="dot"></i></span></div>
                        <div class="node"><span class="fold"></span><label><input type="checkbox" checked><span>STreamT</span></label></div>
                        <div class="legend"><span class="sym"><i class="line olive"></i></span><span>&lt;其他所有值&gt;</span></div>
                        <div class="legend heading"><span>grid_code</span></div>
                        <div class="legend"><span class="sym"><i class="line green"></i></span><span>1</span></div>
                        <div class="legend"><span class="sym"><i class="line yellow"></i></span><span>2</span></div>
                        <div class="legend"><span class="sym"><i class="line red"></i></span><span>3</span></div>
                        <div class="node"><span class="fold"></span><label><input type="checkbox" checked><span class="selected">watershT</span></label></div>
                        <div class="legend"><span class="sym"><i class="box"></i></span></div>
                        <div class="node"><span class="fold"></span><label><input type="checkbox" checked><span>area</span></label></div>
                        <div class="legend"><span class="sym"><i class="box outline-red"></i></span></div>
                        <div class="node"><span class="fold"></span><label><input type="checkbox" checked><span>Watersh</span></label></div>
                        <div class="legend heading"><span>值</span></div>
                        <div class="ramp"><i></i><div><span>高 : 78</span><span>低 : 2</span></div></div>
                        <div class="node"><span class="fold"></span><label><input type="checkbox"><span>SnapPou</span></label></div>
                        <div class="legend heading"><span>值</span></div>
                        <div class="ramp"><i></i><div><span>高 : 78</span><span>低 : 2</span></div></div>
                        <div class="node"><span class="fold"></span><label><input type="checkbox"><span>Stream_Stre</span></label></div>
                        <div class="legend"><span class="sym"><i class="box fill-purple"></i></span><span>1</span></div>
                        <div class="legend"><span class="sym"><i class="box fill-green"></i></span><span>2</span></div>
                        <div class="legend"><span class="sym"><i class="box fill-red"></i></span><span>3</span></div>
                        <div class="node"><span class="fold"></span><label><input type="checkbox"><span>StreamL</span></label></div>
                        <div class="legend heading"><span>值</span></div>
                        <div class="ramp"><i></i><div><span>高 : 78</span></div></div>
                    </div>
                    <div class="vscroll">
                        <svg><use href="#up"/></svg><i class="thumb thumb-toc"></i><svg><use href="#down"/></svg>
                    </div>
                </div>
                <div class="hscroll toc-hscroll">
                    <svg><use href="#left"/></svg><i class="thumb"></i><svg><use href="#right"/></svg>
                </div>
            </div>
        </aside>

        <section class="map-pane">
            <div class="map-body">
                <div class="map-canvas">
                    <svg class="map" viewBox="0 0 1260 2220" role="img" aria-label="流域地图">
                        <g stroke="#000" stroke-width="3" stroke-linejoin="round">
                            <path d="M32 38H190V42H347L352 62 372 100 388 120 404 148 414 190 422 215 426 270 470 330 535 420V900H32z" fill="#1c1c1c"/>
                            <path d="M253 230L362 234 368 240 424 246 430 275 455 310 470 345V365L440 415 410 428 385 438 378 460H80L78 425 150 350 165 310 175 310z" fill="#383838"/>
                            <path d="M32 375L118 295 165 308 155 340 145 358 78 425V460H32z" fill="#2a2a2a"/>
                            <path d="M470 362L505 405 515 460H378L385 438 440 415z" fill="#2c2c2c"/>
                            <path d="M430 273L460 262 520 215 575 155 600 115 640 60 650 42H978V60L940 110 918 135 905 180 898 238 860 262 840 278 825 250 790 208 765 215V265L710 268 620 258 530 258z" fill="#090909"/>
                            <path d="M430 280L530 260 620 256 710 270 765 262 755 300 740 335 690 355 610 352 580 365 560 390 530 405 505 405 470 362 470 340z" fill="#101010"/>
                            <path d="M505 405L530 405 560 390 580 365 610 352 690 355 740 335 755 300 768 250 840 300 865 395 960 410 960 460H515z" fill="#171717"/>
                            <path d="M685 400C690 370 730 365 760 380L830 400z" fill="#292929"/>
                            <path d="M770 262L765 215 790 208 825 250 840 278 830 330 865 395 820 340z" fill="#1b1b1b"/>
                            <path d="M978 60V180L970 240 1000 290 1010 330 958 372V400H865L830 340 840 278 898 238 905 180 918 135z" fill="#242424"/>
                            <path d="M985 178L1015 190 1025 245 1065 315 1130 330 1200 392V410H958V372L1010 330 1000 290 970 240z" fill="#3a3a3a"/>
                            <path d="M980 42H1145L1150 60 1145 105 1170 140 1200 145 1207 160V400L1190 388 1130 330 1065 315 1025 245 1015 190 985 178 978 180z" fill="#000"/>
                        </g>
                        <g fill="none" stroke="#379a0c" stroke-width="3">
                            <path d="M32 222V375L118 295 138 294M78 425L150 354 210 358 225 370M78 425L100 428 125 448M640 45V65L615 80 565 137H555M708 76H732L767 110 733 148V175L757 208V258M795 185H780L767 200V258M686 294L700 296 715 306 745 280 780 272M820 352L830 342M948 357L920 375M1010 395H1060L1072 388M1106 120L1135 150 1140 175 1160 195 1200 228 1185 249H1156"/>
                        </g>
                        <path d="M32 375V425H78M765 258L802 298V320L825 342H845L880 368 920 374 942 400M978 396H996" fill="none" stroke="#e8e010" stroke-width="4"/>
                        <g transform="translate(0 1500)">
                            <g stroke="#111" stroke-width="3" stroke-linejoin="round">
                                <path d="M32 0H1206V684H32z" fill="#eaeaea"/>
                                <path d="M32 0H295V133L332 174 275 207 290 250 287 310 228 343 195 328 160 355 98 360 32 300z" fill="#c9c9c9"/>
                                <path d="M295 0L330 75 410 103 470 112 475 145 525 205 550 260 557 298 440 398 385 403 360 388 307 412 260 400 235 375 228 343 287 310 290 250 275 207 332 174 295 133z" fill="#c5c5c5"/>
                                <path d="M330 75V0H580V88L638 130 630 170 636 225 570 300 557 298 550 260 525 205 475 145 470 112 410 103z" fill="#b8b8b8"/>
                                <path d="M580 0H765V75L773 130 722 167H632L638 130 580 88z" fill="#b6b6b6"/>
                                <path d="M632 167H722L715 200 735 243 785 235 835 247 900 205 908 165 935 155 990 198 1040 192 1008 222 1010 255 1055 272 1040 325 1075 378 1020 402 980 383 918 380 912 330 922 297 890 295 850 318 800 338 765 333 735 295 700 295 665 270 655 240 636 225z" fill="#dcdcdc"/>
                                <path d="M570 300L636 225 655 240 665 270 700 295 735 295 765 333 800 338 850 318 890 295 922 297 912 330 918 380 980 383 1020 402 1075 378 1070 465 1005 550 975 553 958 518 885 512 865 530 862 560 815 545 795 555 765 522 720 518 700 535 670 540 610 525 530 450 500 430 410 420 385 403 440 398z" fill="#e1e1e1"/>
                                <path d="M765 0H1018L1008 70 992 95 1020 130 1045 178 1040 192 990 198 965 170 935 155 908 165 900 205 870 220 835 247 785 235 735 243 715 200 722 167 773 130z" fill="#a9a9a9"/>
                                <path d="M1018 0H1206V138L1185 135 1170 100 1130 72 1095 85 1088 112 1020 130 992 95 1008 70z" fill="#aeaeae"/>
                                <path d="M1020 130L1088 112 1095 85 1130 72 1170 100 1185 135 1206 138V250L1170 248 1115 205 1095 172 1070 167 1050 178z" fill="#d2d2d2"/>
                                <path d="M1050 178L1070 167 1095 172 1115 205 1170 248 1206 250V405L1175 403 1150 380 1075 378 1040 325 1055 272 1010 255 1008 222z" fill="#d0d0d0"/>
                                <path d="M1075 378L1150 380 1175 403 1206 405V684H1075L1070 625 1105 555 1085 475 1070 465z" fill="#fff"/>
                                <path d="M975 555L1005 550 1070 465 1085 475 1105 555 1070 625 1075 684H950L955 650 985 605z" fill="#f9f9f9"/>
                                <path d="M862 560L865 530 885 512 958 518 975 555 985 605 955 650 950 684H843L848 600z" fill="#eee"/>
                            </g>
                            <path d="M212 127L208 145 240 170 275 132 287 138V185L220 243 190 246 155 260M467 130V178M993 30L965 65 945 95H915L895 128 870 137M952 267H905L887 285V298H818M642 368L658 400V460L700 499H748L765 525 795 555M1205 284L1180 292 1152 298M123 684H843M1202 645V666" fill="none" stroke="#4aa822" stroke-width="4"/>
                            <path d="M525 60L543 95 525 131H430L390 135 384 180 355 210 315 214 290 190M893 300V330L865 360 880 395V445L850 465 820 515 797 555 803 600 843 684" fill="none" stroke="#fff200" stroke-width="4"/>
                            <path d="M132 60L163 287 440 402 1103 683 1140 575 1165 390 1202 0" fill="none" stroke="#f40000" stroke-width="11"/>
                        </g>
                        <path d="M118 460L155 295 240 250 405 148 505 90 625 53 1145 50 1175 65 1200 155 1205 400" fill="none" stroke="#fa0000" stroke-width="11"/>
                    </svg>
                </div>
                <div class="vscroll">
                    <svg><use href="#up"/></svg><i class="thumb"></i><svg><use href="#down"/></svg>
                </div>
            </div>
            <div class="map-footer">
                <button class="tool on" aria-label="数据视图"><svg><use href="#dataview"/></svg></button>
                <button class="tool" aria-label="布局视图"><svg><use href="#pageview"/></svg></button>
                <span class="sep"></span>
                <button class="tool" aria-label="刷新"><svg><use href="#refresh"/></svg></button>
                <button class="tool" aria-label="暂停绘制"><svg><use href="#pause"/></svg></button>
                <div class="hscroll">
                    <svg><use href="#left"/></svg><i class="thumb"></i><svg><use href="#right"/></svg>
                </div>
            </div>
        </section>

        <aside class="search">
            <header class="panel-title">
                <h2>搜索</h2>
                <button aria-label="自动隐藏"><svg><use href="#pin"/></svg></button>
                <button aria-label="关闭"><svg><use href="#close"/></svg></button>
            </header>
            <div class="search-tools">
                <button class="tool" aria-label="后退"><svg><use href="#back"/></svg></button>
                <button class="tool" aria-label="前进"><svg><use href="#fwd"/></svg></button>
                <span class="sep dark"></span>
                <button class="tool" aria-label="主页"><svg><use href="#home"/></svg></button>
                <button class="tool" aria-label="刷新"><svg><use href="#refresh"/></svg></button>
                <span class="sep dark"></span>
                <button class="tool" aria-label="选项"><svg><use href="#options"/></svg></button>
                <button class="drop" aria-label="选项菜单"></button>
                <span class="combo combo-local">
                    <select aria-label="搜索范围"><option>本地搜索</option></select>
                    <svg><use href="#chevron"/></svg>
                </span>
            </div>
            <div class="search-body">
                <div class="search-content">
                    <div class="search-form">
                        <nav class="search-tabs">
                            <b>全部</b>
                            <a href="#">地图</a>
                            <a href="#">数据</a>
                            <a href="#">工具</a>
                            <a href="#">图像</a>
                        </nav>
                        <div class="search-line">
                            <input type="text" aria-label="搜索内容" value="栅格转面">
                            <button class="go" aria-label="开始搜索"><svg><use href="#glass"/></svg></button>
                        </div>
                        <div class="extent"><a href="#">任何范围</a><span class="tri"></span></div>
                    </div>
                    <div class="result-bar">
                        <a href="#">返回的搜索结果 1 项</a><span class="tri"></span>
                        <a class="sort" href="#">排序方式</a><span class="tri"></span>
                    </div>
                    <article class="result">
                        <svg><use href="#hammer"/></svg>
                        <div>
                            <h3><a href="#"><b>栅格转面</b> (转换)</a> <span>(工具)</span></h3>
                            <p class="summary">将栅格数据集转换为面要素。</p>
                            <p class="path">工具箱\系统工具箱\conversion tools.tbx\由栅...</p>
                        </div>
                    </article>
                </div>
                <div class="vscroll pale">
                    <svg><use href="#up"/></svg><svg><use href="#down"/></svg>
                </div>
            </div>
            <div class="pager"><span>1</span></div>
            <div class="dock-tabs">
                <button><svg><use href="#toolbox"/></svg>ArcToolbox</button>
                <button><svg><use href="#catalog"/></svg>目录</button>
                <button class="current"><svg><use href="#searchwin"/></svg>搜索</button>
            </div>
        </aside>
    </main>

    <footer class="statusbar"><span>433457.778&nbsp; 2847185.83 米</span></footer>
    <div class="edge"></div>

    <!-- Attribute table window -->
    <section class="table-window">
        <header class="table-title">表</header>
        <div class="table-tools">
            <span class="split">
                <button aria-label="表选项"><svg><use href="#options"/></svg></button>
                <button class="drop" aria-label="表选项菜单"></button>
            </span>
            <span class="sep"></span>
            <button class="tool" aria-label="关联表"><svg><use href="#related"/></svg></button>
            <button class="drop" aria-label="关联表菜单"></button>
            <span class="sep"></span>
            <button class="tool" aria-label="按属性选择"><svg><use href="#selattr"/></svg></button>
            <button class="tool" aria-label="切换选择"><svg><use href="#switch"/></svg></button>
            <button class="tool" aria-label="清除所选内容"><svg><use href="#clear"/></svg></button>
            <button class="tool" aria-label="缩放至所选项"><svg><use href="#zsel"/></svg></button>
            <button class="tool" aria-label="删除所选项"><svg><use href="#del"/></svg></button>
        </div>
        <div class="table-title">watershT</div>
        <div class="grid-frame">
            <div class="grid-view">
                <table class="grid">
                    <colgroup><col class="c0"><col class="c1"><col class="c2"><col class="c3"><col class="c4"><col class="c5"></colgroup>
                    <thead>
                        <tr><th></th><th>Shape *</th><th>Id</th><th>gridcode</th><th>Shape_Length</th><th>Shape_Area</th></tr>
                    </thead>
                    <tbody>
                        <tr><th><svg><use href="#next"/></svg></th><td>面</td><td>1</td><td>7</td><td>13.2652</td><td>10.997846</td></tr>
                        <tr><th></th><td>面</td><td>2</td><td>5</td><td>1023.56814</td><td>37670.279253</td></tr>
                        <tr><th></th><td>面</td><td>3</td><td>11</td><td>951.197254</td><td>42623.422136</td></tr>
                        <tr><th></th><td>面</td><td>4</td><td>2</td><td>736.158035</td><td>26677.403862</td></tr>
                        <tr><th></th><td>面</td><td>5</td><td>13</td><td>636.844127</td><td>15418.562946</td></tr>
                        <tr><th></th><td>面</td><td>6</td><td>9</td><td>13.2652</td><td>10.997846</td></tr>
                        <tr><th></th><td>面</td><td>7</td><td>9</td><td>13.2648</td><td>10.997182</td></tr>
                        <tr><th></th><td>面</td><td>8</td><td>7</td><td>695.10588</td><td>16183.269683</td></tr>
                        <tr><th></th><td>面</td><td>9</td><td>20</td><td>647.209676</td><td>12470.024921</td></tr>
                    </tbody>
                </table>
            </div>
            <div class="hscroll grid-hscroll"><svg><use href="#left"/></svg><i class="thumb"></i></div>
        </div>
        <div class="record-nav">
            <button class="tool" aria-label="第一条"><svg><use href="#first"/></svg></button>
            <button class="tool" aria-label="上一条"><svg><use href="#prev"/></svg></button>
            <input type="text" aria-label="当前记录" value="1">
            <button class="tool" aria-label="下一条"><svg><use href="#next"/></svg></button>
            <button class="tool" aria-label="最后一条"><svg><use href="#last"/></svg></button>
            <span class="sep"></span>
            <button class="tool active big" aria-label="显示所有记录"><svg><use href="#allrec"/></svg></button>
            <button class="tool big" aria-label="显示所选记录"><svg><use href="#selrec"/></svg></button>
            <span class="sep"></span>
            <span class="count">(0 / 59 已选择)</span>
        </div>
        <div class="table-tabs"><button>watershT</button></div>
    </section>

    <!-- Add field dialog -->
    <form class="dialog" role="dialog" aria-labelledby="dialogTitle">
        <header>
            <h2 id="dialogTitle">添加字段</h2>
            <button type="button" aria-label="关闭"><svg><use href="#thinclose"/></svg></button>
        </header>
        <div class="dialog-body">
            <div class="field">
                <label for="fieldName">名称(N):</label>
                <input type="text" id="fieldName" value="流域">
            </div>
            <div class="field">
                <label for="fieldType">类型(T):</label>
                <span class="combo combo-type">
                    <select id="fieldType"><option>文本</option></select>
                    <svg><use href="#chevron"/></svg>
                </span>
            </div>
            <fieldset>
                <legend>字段属性</legend>
                <table class="props">
                    <tr><th>别名</th><td></td></tr>
                    <tr><th>允许空值</th><td>是</td></tr>
                    <tr><th>默认值</th><td></td></tr>
                    <tr><th>长度</th><td>10</td></tr>
                </table>
            </fieldset>
            <div class="dialog-buttons">
                <button type="button">确定</button>
                <button type="button">取消</button>
            </div>
        </div>
    </form>
</body>
</html>
```
FILE: styles.css
```css
* {
    margin: 0;
    padding: 0;
    box-sizing: border-box;
}

body {
    height: 100vh;
    display: flex;
    flex-direction: column;
    overflow: hidden;
    position: relative;
    background: #f0f0f0;
    color: #1a1a1a;
    font-family: "Noto Sans", "Noto Sans CJK SC", sans-serif;
    font-size: 15px;
    line-height: 20px;
}

button,
input,
select {
    font: inherit;
    color: inherit;
    border: none;
    border-radius: 0;
    background: none;
}

svg {
    flex: none;
    display: block;
    width: 20px;
    height: 20px;
}

table {
    border-collapse: collapse;
    table-layout: fixed;
}

a {
    color: #0563c8;
}

.sprite {
    position: absolute;
    width: 0;
    height: 0;
}

/* Menu and toolbars */
.menubar {
    flex: none;
    height: 35px;
    display: flex;
    align-items: center;
    gap: 21px;
    padding: 0 0 3px 16px;
    background: linear-gradient(to right, #f0f0f0, #fafafa);
}

.toolbar-row {
    flex: none;
    height: 32px;
    display: flex;
    gap: 4px;
    padding-left: 4px;
    background: linear-gradient(to right, #f0f0f0, #fafafa);
}

.toolbar-row + .toolbar-row {
    height: 33px;
    gap: 6px;
}

.toolbar {
    display: flex;
    align-items: center;
    padding-bottom: 2px;
    background: linear-gradient(#fdfdfd, #efefef);
}

.grip {
    width: 9px;
    height: 20px;
    background: radial-gradient(circle, #b5b5b5 1px, transparent 2px) 0 0 / 9px 5px;
}

.sep {
    flex: none;
    width: 9px;
    height: 20px;
    background: linear-gradient(#c4c4c4, #c4c4c4) center / 1px 100% no-repeat;
}

.sep.dark {
    height: 32px;
    background-image: linear-gradient(#777, #777);
}

.tool {
    flex: none;
    width: 27px;
    height: 28px;
    display: flex;
    align-items: center;
    justify-content: center;
}

.tool.active {
    border: 2px solid #3390df;
    background: #d9e8f5;
}

.tool.pressed {
    border: 2px solid #b5bcc2;
    background: #dce7f1;
}

.drop {
    flex: none;
    width: 12px;
    height: 20px;
    display: flex;
    align-items: center;
    justify-content: center;
}

.drop::before,
.tri,
.classic-arrow::before {
    content: "";
    border: 4px solid transparent;
    border-top: 5px solid #111;
    border-bottom: none;
}

.drop.muted::before {
    border-top-color: #aaa;
}

.overflow {
    align-self: stretch;
    width: 14px;
    margin-left: 1px;
    display: flex;
    flex-direction: column;
    align-items: center;
    justify-content: flex-end;
    gap: 2px;
    padding-bottom: 3px;
    background: linear-gradient(#f4f4f4, #a8a8a8);
}

.toolbar + .toolbar .overflow {
    margin-left: 4px;
}

.overflow::before {
    content: "";
    width: 7px;
    height: 2px;
    background: #111;
}

.overflow::after {
    content: "";
    border: 4px solid transparent;
    border-top: 5px solid #111;
    border-bottom: none;
}

.text-tool {
    padding: 0 2px 0 3px;
    white-space: nowrap;
}

.combo {
    position: relative;
    display: flex;
    color: #444;
}

.combo select {
    appearance: none;
    width: 100%;
    height: 100%;
    color: #111;
}

.combo > svg {
    position: absolute;
    right: 3px;
    top: 50%;
    width: 14px;
    height: 14px;
    margin-top: -7px;
    pointer-events: none;
}

.combo-scale {
    width: 185px;
    height: 25px;
    border: 2px solid #8a8a8a;
    background: #fff;
    font: 13px/18px "Liberation Mono", monospace;
}

.combo-scale select {
    padding: 0 0 2px 2px;
}

.combo-percent {
    width: 75px;
    height: 25px;
    border: 2px solid #c9c9c9;
    background: #fff;
    color: #bbb;
    font: 13px/18px "Liberation Mono", monospace;
}

.combo-percent select {
    width: 48px;
    margin: 2px;
    height: 17px;
    background: #eee;
    color: #666;
}

.combo-layer {
    width: 222px;
    height: 24px;
    border: 2px solid #777;
    border-right-color: #ccc;
    border-bottom-color: #ccc;
    background: #fff;
}

.combo-layer .lead {
    left: 1px;
    right: auto;
    width: 20px;
    height: 20px;
    margin-top: -10px;
}

.combo-layer select {
    padding-left: 25px;
}

.classic-arrow {
    flex: none;
    width: 20px;
    display: flex;
    align-items: center;
    justify-content: center;
    background: #f0f0f0;
    border: 2px solid #fff;
    border-right-color: #777;
    border-bottom-color: #777;
}

.classic-arrow::before {
    flex: none;
}

/* Workspace */
.workspace {
    flex: 1;
    min-height: 0;
    display: flex;
    gap: 7px;
    background: #f0f0f0;
}

.panel-title {
    flex: none;
    height: 27px;
    display: flex;
    align-items: center;
    gap: 4px;
    padding: 0 4px 0 5px;
    background: linear-gradient(to right, #bccbdb, #d6e5f3);
}

.panel-title h2 {
    flex: 1;
    font-size: 15px;
    font-weight: normal;
}

.panel-title svg {
    width: 15px;
    height: 15px;
}

.toc {
    flex: none;
    width: 253px;
    display: flex;
    flex-direction: column;
    padding-bottom: 2px;
}

.toc-tools {
    flex: none;
    height: 33px;
    display: flex;
    align-items: center;
    padding-left: 5px;
    background: linear-gradient(#fdfdfd, #efefef);
}

.toc-box {
    flex: 1;
    min-height: 0;
    display: flex;
    flex-direction: column;
    padding: 2px;
    border: 1px solid #7f8796;
    background: #fff;
}

.toc-body {
    flex: 1;
    min-height: 0;
    display: flex;
}

.tree {
    flex: 1;
    overflow: hidden;
}

.node,
.legend {
    height: 25px;
    display: flex;
    align-items: center;
    white-space: nowrap;
}

.node {
    padding-left: 32px;
}

.node.root {
    padding-left: 9px;
}

.node.root svg {
    margin: 0 6px 0 7px;
}

.node b,
.legend > span {
    padding-bottom: 3px;
}

.node label {
    display: flex;
    align-items: center;
    height: 25px;
    margin-left: 10px;
}

.node label span {
    margin-left: 7px;
    padding: 1px 3px 4px;
}

.node .selected {
    background: #0078d7;
    color: #fff;
}

.node input {
    appearance: none;
    width: 14px;
    height: 14px;
    border: 1px solid #111;
    background: #fff;
}

.node input:checked::before {
    content: "";
    display: block;
    width: 9px;
    height: 5px;
    margin: 2px 0 0 1px;
    border: solid #000;
    border-width: 0 0 2px 2px;
    transform: rotate(-50deg);
}

.fold {
    width: 11px;
    height: 11px;
    border: 1px solid #9a9a9a;
    border-radius: 2px;
    background: linear-gradient(#3a5fae, #3a5fae) center / 7px 1px no-repeat, #f4f4f4;
}

.legend {
    padding-left: 72px;
}

.legend.heading {
    padding-left: 101px;
}

.legend > .sym {
    width: 23px;
    display: flex;
    align-items: center;
    padding: 0;
}

.line {
    width: 18px;
    height: 1px;
}

.olive { background: #7a8c1e; }
.green { background: #38a800; }
.yellow { background: #ffff00; }
.red { background: #f00; }

.dot {
    width: 8px;
    height: 8px;
    margin-left: 2px;
    border: 1px solid #111;
    border-radius: 4px;
    background: #2a0a8c;
}

.box {
    width: 19px;
    height: 14px;
    border: 1px solid #222;
}

.outline-red {
    width: 21px;
    height: 15px;
    border: 3px solid #f00;
    border-radius: 2px;
}

.fill-purple { background: #2d0035; border-color: #777; }
.fill-green { background: #8fef5c; border-color: #777; }
.fill-red { background: #fd3722; border-color: #777; }

.ramp {
    height: 100px;
    display: flex;
    gap: 7px;
    padding-left: 72px;
}

.ramp i {
    width: 16px;
    height: 50px;
    background: linear-gradient(#f4f4f4, #000);
}

.ramp div {
    height: 66px;
    display: flex;
    flex-direction: column;
    justify-content: space-between;
    line-height: 16px;
}

/* Scrollbars */
.vscroll,
.hscroll {
    display: flex;
    align-items: center;
    background: #f0f0f0;
    color: #505050;
}

.vscroll {
    flex: none;
    width: 20px;
    flex-direction: column;
    justify-content: space-between;
    padding: 3px 0;
    gap: 3px;
}

.hscroll {
    height: 19px;
    padding: 0 3px;
    gap: 3px;
}

.vscroll svg,
.hscroll svg {
    width: 14px;
    height: 14px;
}

.thumb {
    flex: 1;
    background: #cdcdcd;
}

.vscroll .thumb {
    width: 18px;
}

.hscroll .thumb {
    height: 100%;
}

.vscroll .thumb-toc {
    flex: none;
    height: 250px;
    margin-bottom: auto;
}

.toc-hscroll {
    margin-right: 20px;
    background: #f0f0f0;
}

.toc-hscroll .thumb {
    margin-right: 24px;
}

.pale {
    background: #f8f8f8;
    color: #bdbdbd;
    padding: 18px 0 0;
}

.pale svg {
    width: 18px;
    height: 18px;
}

/* Map */
.map-pane {
    flex: 1;
    min-width: 0;
    display: flex;
    flex-direction: column;
    padding-bottom: 2px;
    border-top: 2px solid #7a7a7a;
    border-left: 2px solid #8a8a8a;
}

.map-body {
    flex: 1;
    min-height: 0;
    display: flex;
}

.map-canvas {
    flex: 1;
    overflow: hidden;
    background: #fff;
    border-right: 2px solid #dcdcdc;
}

.map {
    width: 420px;
    height: 740px;
    margin: 58px 0 0 338px;
}

.map-footer {
    flex: none;
    height: 22px;
    display: flex;
    align-items: center;
    padding-right: 22px;
}

.map-footer .tool {
    width: 21px;
    height: 20px;
}

.map-footer .tool.on {
    background: #b9dcf5;
}

.map-footer .tool svg {
    width: 14px;
    height: 14px;
}

.map-footer .hscroll {
    flex: 1;
}

/* Search panel */
.search {
    flex: none;
    width: 375px;
    display: flex;
    flex-direction: column;
    padding-bottom: 2px;
}

.search-tools {
    flex: none;
    height: 35px;
    display: flex;
    align-items: center;
    padding: 0 2px 0 1px;
}

.search-tools .combo {
    flex: 1;
    height: 29px;
    margin-left: 12px;
    border: 1px solid #a6a6a6;
    background: #e1e1e1;
}

.combo-local select {
    padding-left: 4px;
}

.search-body {
    flex: 1;
    min-height: 0;
    display: flex;
}

.search-content {
    flex: 1;
    min-width: 0;
    background: #fff;
    border-top: 1px solid #b4b4b4;
    border-bottom: 1px solid #b4b4b4;
}

.search-form {
    height: 99px;
    padding: 9px 12px 0;
}

.search-tabs {
    display: flex;
    gap: 24px;
    font-size: 11px;
    line-height: 16px;
}

.search-line {
    display: flex;
    align-items: center;
    gap: 12px;
    margin-top: 7px;
}

.search-line input {
    width: 275px;
    height: 29px;
    padding-left: 2px;
    border: 2px solid #777;
    border-right: 1px solid #aaa;
    border-bottom: 1px solid #aaa;
    background: #fff;
    color: #2b1a80;
    font-size: 16px;
}

.go {
    width: 26px;
    height: 27px;
    display: flex;
    align-items: center;
    justify-content: center;
    border: 1px solid #7fb6dc;
    border-radius: 50%;
    background: radial-gradient(#fff, #b8def5);
}

.extent {
    display: flex;
    align-items: center;
    gap: 5px;
    margin-top: 4px;
    font-size: 12px;
}

.result-bar {
    height: 29px;
    display: flex;
    align-items: center;
    gap: 6px;
    padding: 0 16px 0 11px;
    border-top: 1px solid #b4b4b4;
    border-bottom: 1px solid #b4b4b4;
    background: #efefef;
    font-size: 11px;
}

.sort {
    margin-left: auto;
}

.result {
    display: flex;
    gap: 7px;
    padding: 0 6px;
}

.result > svg {
    margin-top: 4px;
}

.result div {
    min-width: 0;
}

.result h3 {
    color: #0a840a;
    font-size: 15px;
    font-weight: normal;
    line-height: 19px;
}

.result h3 a {
    text-decoration: none;
}

.result p {
    white-space: nowrap;
    line-height: 18px;
}

.summary {
    color: #123a6b;
    font-size: 13px;
}

.path {
    color: #0a840a;
    font-size: 14px;
}

.pager {
    flex: none;
    height: 23px;
    padding: 4px 24px 0 0;
    color: #f00;
    line-height: 18px;
    text-align: center;
}

.dock-tabs {
    flex: none;
    height: 24px;
    display: flex;
    gap: 1px;
    padding-left: 3px;
    background: #fafafa;
}

.dock-tabs button {
    display: flex;
    align-items: center;
    gap: 5px;
    padding: 0 5px 2px;
    border: 1px solid #b0b0b0;
    border-top: none;
    border-radius: 0 0 4px 4px;
    background: #f0f0f0;
    color: #888;
}

.dock-tabs .current {
    background: #fff;
    color: #111;
}

.statusbar {
    flex: none;
    height: 25px;
    display: flex;
    justify-content: flex-end;
    padding-top: 2px;
    background: #f0f0f0;
    border-top: 1px solid #fafafa;
}

.statusbar span {
    width: 352px;
}

.edge {
    flex: none;
    height: 2px;
    background: linear-gradient(to right, #253d38 60px, #c0c0c0 60px, #e0e0e0 490px, #253d38 490px);
}

/* Attribute table window */
.table-window {
    position: absolute;
    left: 146px;
    top: 310px;
    width: 730px;
    height: 375px;
    display: flex;
    flex-direction: column;
    padding: 5px 4px 0 4px;
    border-right: 2px solid #111;
    border-bottom: 2px solid #000;
    background: #f4f4f4;
}

.table-title {
    flex: none;
    height: 27px;
    padding: 3px 5px;
    background: linear-gradient(to right, #9cb6d3, #b9d1eb);
}

.table-tools {
    flex: none;
    height: 35px;
    display: flex;
    align-items: center;
    padding-left: 4px;
    background: linear-gradient(#fdfdfd, #f0f0f0);
}

.split {
    height: 28px;
    display: flex;
    border: 2px solid #3390df;
    background: #b9dcf5;
}

.split button {
    height: 24px;
    display: flex;
    align-items: center;
    justify-content: center;
    width: 25px;
}

.split .drop {
    width: 13px;
    border-left: 1px solid #3390df;
}

.grid-frame {
    flex: none;
    height: 211px;
    padding-left: 2px;
    border-top: 5px solid #808080;
    border-left: 3px solid #808080;
    background: #f0f0f0;
}

.grid-view {
    height: 186px;
    overflow: hidden;
}

.grid {
    width: 574px;
    background: #fff;
    font: 13px/17px "Liberation Mono", "Noto Sans CJK SC", monospace;
}

.c0 { width: 22px; }
.c1 { width: 101px; }
.c2 { width: 45px; }
.c3 { width: 112px; }
.c4 { width: 158px; }
.c5 { width: 136px; }

.grid td {
    height: 19px;
    padding: 0 4px;
    border: 1px solid #666;
    text-align: right;
}

.grid tr:nth-child(3n) td {
    height: 18px;
}

.grid td:nth-child(2) {
    text-align: left;
}

.grid th {
    border-right: 2px solid #222;
    border-bottom: 2px solid #222;
    background: #f0f0f0;
}

.grid thead th {
    height: 21px;
    font-size: 15px;
}

.grid tbody th svg {
    width: 16px;
    height: 14px;
    margin: auto;
}

.grid-hscroll {
    height: 20px;
}

.grid-hscroll .thumb {
    margin-left: 108px;
}

.record-nav {
    flex: none;
    height: 37px;
    display: flex;
    align-items: center;
    padding-left: 8px;
    background: linear-gradient(#fcfcfc, #f0f0f0);
}

.record-nav .tool svg {
    width: 16px;
    height: 16px;
}

.record-nav .big svg {
    width: 22px;
    height: 22px;
}

.record-nav .big + .big {
    margin-left: 1px;
}

.record-nav input {
    width: 74px;
    height: 26px;
    padding-right: 5px;
    background: #fff;
    text-align: right;
}

.count {
    padding-left: 4px;
}

.table-tabs {
    padding: 1px 0 0 2px;
}

.table-tabs button {
    height: 23px;
    padding: 0 5px;
    border: 1px solid #b0b0b0;
    border-top: none;
    border-radius: 0 0 4px 4px;
    background: #fff;
    outline: 1px dotted #222;
    outline-offset: -3px;
}

/* Add field dialog */
.dialog {
    position: absolute;
    left: 778px;
    top: 292px;
    width: 366px;
    height: 378px;
    border: 1px solid #9a9a9a;
    background: #f0f0f0;
    box-shadow: 2px 3px 10px rgba(0, 0, 0, 0.35);
    color: #000;
}

.dialog header {
    height: 38px;
    display: flex;
    align-items: center;
    justify-content: space-between;
    padding: 0 14px 0 10px;
    background: #fff;
    color: #999;
}

.dialog h2 {
    font-size: 15px;
    font-weight: normal;
}

.dialog header svg {
    width: 14px;
    height: 14px;
}

.dialog-body {
    padding: 14px 14px 0 13px;
}

.field {
    display: flex;
    align-items: flex-start;
    height: 45px;
}

.field label {
    width: 83px;
    line-height: 16px;
}

.field input {
    width: 241px;
    height: 29px;
    padding: 0 4px 4px;
    border: 1px solid #7a7a7a;
    background: #fff;
}

.combo-type {
    width: 241px;
    height: 27px;
    border: 1px solid #a6a6a6;
    background: #e1e1e1;
}

.combo-type select {
    padding-left: 4px;
}

.dialog fieldset {
    height: 186px;
    margin-top: -5px;
    padding: 8px 14px 0;
    border: 1px solid #dcdcdc;
}

.dialog legend {
    margin-left: -6px;
    padding: 0 2px;
}

.props {
    width: 308px;
    background: #fff;
}

.props th,
.props td {
    height: 20px;
    padding: 0 2px;
    border: 1px solid #777;
    font-weight: normal;
    line-height: 18px;
    text-align: left;
}

.props th {
    width: 184px;
}

.dialog-buttons {
    display: flex;
    justify-content: flex-end;
    gap: 10px;
    margin-top: 12px;
}

.dialog-buttons button {
    width: 91px;
    height: 27px;
    border: 1px solid #adadad;
    background: #e1e1e1;
}
```
